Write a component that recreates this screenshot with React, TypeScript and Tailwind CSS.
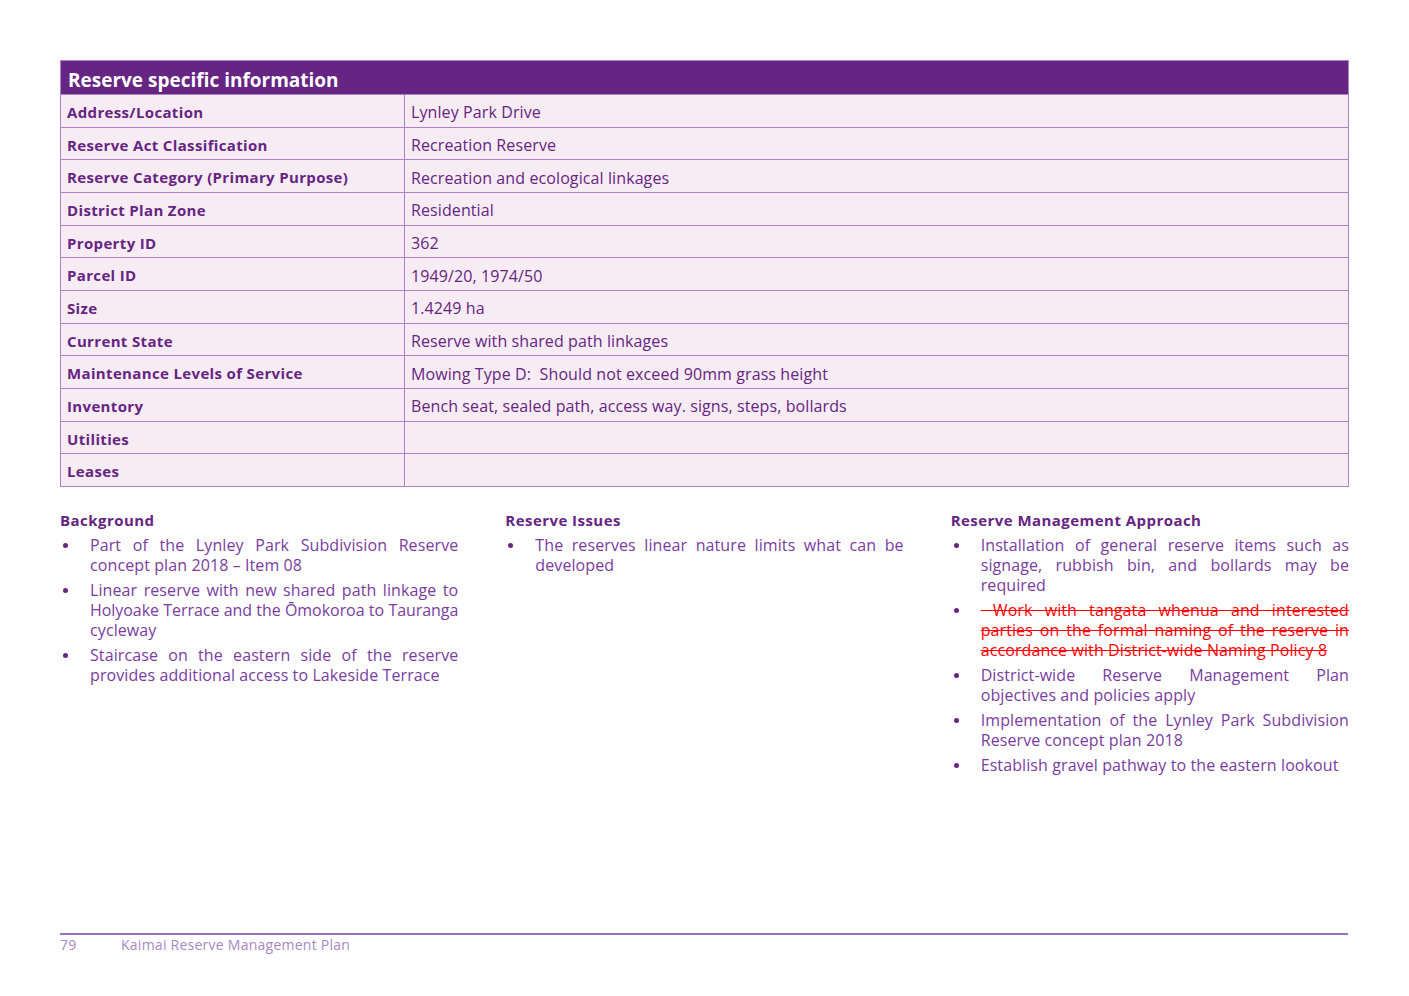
import React from "react";

const rows: [string, string][] = [
  ["Address/Location", "Lynley Park Drive"],
  ["Reserve Act Classification", "Recreation Reserve"],
  ["Reserve Category (Primary Purpose)", "Recreation and ecological linkages"],
  ["District Plan Zone", "Residential"],
  ["Property ID", "362"],
  ["Parcel ID", "1949/20, 1974/50"],
  ["Size", "1.4249 ha"],
  ["Current State", "Reserve with shared path linkages"],
  ["Maintenance Levels of Service", "Mowing Type D:\u00a0 Should not exceed 90mm grass height"],
  ["Inventory", "Bench seat, sealed path, access way. signs, steps, bollards"],
  ["Utilities", ""],
  ["Leases", ""],
];

type Item = { lines: string[]; struck?: boolean };

const TIGHT = "Holyoake Terrace and the \u014Cmokoroa to Tauranga";

const columns: { title: string; items: Item[] }[] = [
  {
    title: "Background",
    items: [
      { lines: ["Part of the Lynley Park Subdivision Reserve", "concept plan 2018 \u2013 Item 08"] },
      {
        lines: ["Linear reserve with new shared path linkage to", TIGHT, "cycleway"],
      },
      {
        lines: [
          "Staircase on the eastern side of the reserve",
          "provides additional access to Lakeside Terrace",
        ],
      },
    ],
  },
  {
    title: "Reserve Issues",
    items: [{ lines: ["The reserves linear nature limits what can be", "developed"] }],
  },
  {
    title: "Reserve Management Approach",
    items: [
      {
        lines: [
          "Installation of general reserve items such as",
          "signage, rubbish bin, and bollards may be",
          "required",
        ],
      },
      {
        lines: [
          "\u00a0Work with tangata whenua and interested",
          "parties on the formal naming of the reserve in",
          "accordance with District-wide Naming Policy 8",
        ],
        struck: true,
      },
      { lines: ["District-wide Reserve Management Plan", "objectives and policies apply"] },
      { lines: ["Implementation of the Lynley Park Subdivision", "Reserve concept plan 2018"] },
      { lines: ["Establish gravel pathway to the eastern lookout"] },
    ],
  },
];

export default function App() {
  return (
    <div
      className="relative h-[996px] w-[1409px] bg-white"
      style={{ fontFamily: '"Open Sans", "DejaVu Sans", sans-serif' }}
    >
      <div className="px-[60px] pt-[60px]">
        <div className="border border-[#a985c8]">
          <div className="flex h-[33px] items-end bg-[#662483] px-[7px] pb-0 text-[19px] font-bold text-white">
            Reserve specific information
          </div>
          {rows.map(([k, v]) => (
            <div
              key={k}
              className="flex h-[32.67px] border-t border-[#a985c8] bg-[#f7ecf4] text-[#662483]"
            >
              <div className="flex w-[344px] items-center border-r border-[#a985c8] px-[6px] pt-[3px] text-[15px] font-bold tracking-[0.35px]">
                {k}
              </div>
              <div className="flex flex-1 items-center px-[6px] pt-[3px] text-[16px] tracking-[0.1px]">
                {v}
              </div>
            </div>
          ))}
        </div>

        <div className="mt-[23px] grid grid-cols-3 gap-x-[47px]">
          {columns.map((c) => (
            <div key={c.title}>
              <div className="text-[15px] font-bold leading-[20px] tracking-[0.45px] text-[#662483]">
                {c.title}
              </div>
              <ul className="mt-[5px] flex flex-col gap-[5px]">
                {c.items.map((it, i) => (
                  <li key={i} className="flex text-[16px] leading-[20px] tracking-[0.1px]">
                    <span className="w-[30px] shrink-0 pl-[3px] pt-[8px]">
                      <span className="block h-[5px] w-[5px] rounded-full bg-[#662483]" />
                    </span>
                    <span
                      className={
                        it.struck
                          ? "min-w-0 flex-1 text-[#ff0000] line-through"
                          : "min-w-0 flex-1 text-[#7a3c9f]"
                      }
                    >
                      {it.lines.map((ln, j) => (
                        <span
                          key={j}
                          className={
                            ln === TIGHT
                              ? "block whitespace-nowrap tracking-[-0.05px] text-justify [text-align-last:justify] [word-spacing:-1px]"
                              : j < it.lines.length - 1
                              ? "block whitespace-nowrap text-justify [text-align-last:justify]"
                              : "block whitespace-nowrap"
                          }
                        >
                          {ln}
                        </span>
                      ))}
                    </span>
                  </li>
                ))}
              </ul>
            </div>
          ))}
        </div>
      </div>

      <div className="absolute left-[60px] right-[61px] top-[933px]">
        <div className="h-[2px] bg-[#9d6cc5]" />
        <div className="mt-[1px] flex text-[14px] leading-[18px] tracking-[0.25px] text-[#a788c4]">
          <span className="w-[61px]">79</span>
          <span>Kaimai Reserve Management Plan</span>
        </div>
      </div>
    </div>
  );
}
